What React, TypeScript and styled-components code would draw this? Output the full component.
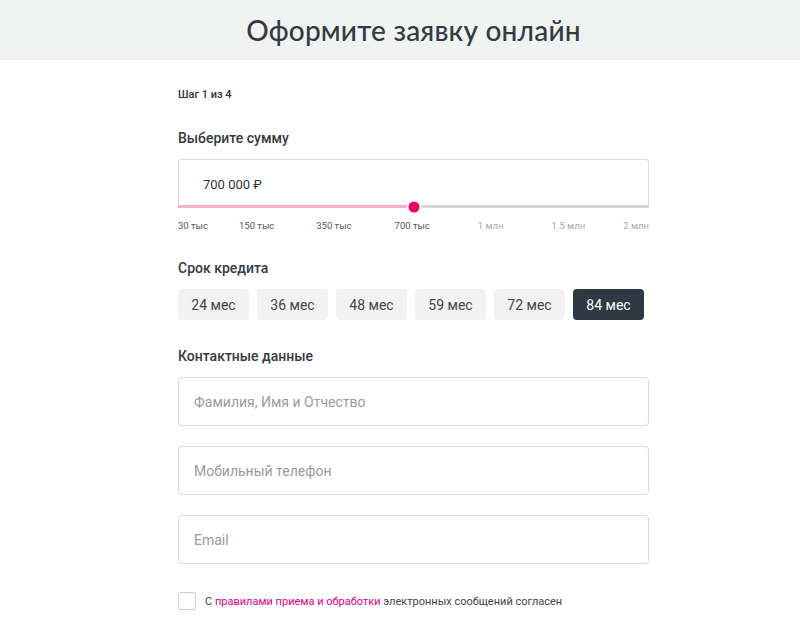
import React, { useState } from "react";
import styled, { createGlobalStyle } from "styled-components";

const GlobalStyle = createGlobalStyle`
  html, body {
    margin: 0;
    padding: 0;
    background: #ffffff;
    font-family: Roboto, "Liberation Sans", Arial, sans-serif;
    color: #333b44;
  }
`;

const terms = [24, 36, 48, 59, 72, 84];
// gap before each mark, as the scale on the site is not even
const marks = [
  { label: "30 тыс", passed: true, gap: 0 },
  { label: "150 тыс", passed: true, gap: 31 },
  { label: "350 тыс", passed: true, gap: 42 },
  { label: "700 тыс", passed: true, gap: 43 },
  { label: "1 млн", passed: false, gap: 48 },
  { label: "1.5 млн", passed: false, gap: 48 },
  { label: "2 млн", passed: false, gap: 0 },
];

const App = () => {
  const [term, setTerm] = useState<number>(84);
  const [agree, setAgree] = useState<boolean>(false);
  const progress = 50;

  return (
    <Page>
      <GlobalStyle />
      <Header>
        <Title>Оформите заявку онлайн</Title>
      </Header>
      <Form>
        <Step>Шаг 1 из 4</Step>

        <SectionTitle>Выберите сумму</SectionTitle>
        <AmountBox>
          <AmountValue>700 000 ₽</AmountValue>
          <Track>
            <TrackFill style={{ width: `${progress}%` }} />
            <Thumb style={{ left: `${progress}%` }} />
          </Track>
        </AmountBox>
        <Marks>
          {marks.map((m, i) => (
            <Mark
              key={m.label}
              passed={m.passed}
              gap={m.gap}
              last={i === marks.length - 1}
            >
              {m.label}
            </Mark>
          ))}
        </Marks>

        <SectionTitle>Срок кредита</SectionTitle>
        <Terms>
          {terms.map((t) => (
            <TermButton key={t} active={t === term} onClick={() => setTerm(t)}>
              {t} мес
            </TermButton>
          ))}
        </Terms>

        <SectionTitle>Контактные данные</SectionTitle>
        <Fields>
          <Input placeholder="Фамилия, Имя и Отчество" />
          <Input placeholder="Мобильный телефон" />
          <Input placeholder="Email" />
        </Fields>

        <Agreement>
          <CheckBox checked={agree} onClick={() => setAgree(!agree)} />
          <AgreeText>
            С <Link>правилами приема и обработки</Link> электронных сообщений
            согласен
          </AgreeText>
        </Agreement>
      </Form>
    </Page>
  );
};

const Page = styled.div`
  min-height: 617px;
`;

const Header = styled.header`
  height: 60px;
  background: #f1f2f2;
  display: flex;
  align-items: center;
  justify-content: center;
  padding-left: 27px;
`;

const Title = styled.h1`
  margin: 0;
  font-family: Lato, "Open Sans", sans-serif;
  font-weight: 500;
  font-size: 28px;
  letter-spacing: 0.2px;
  color: #323a43;
`;

const Form = styled.main`
  width: 471px;
  margin: 0 0 0 178px;
  padding-top: 28px;
  display: flex;
  flex-direction: column;
`;

const Step = styled.div`
  font-size: 11px;
  font-weight: 500;
  line-height: 14px;
  color: #333;
`;

const SectionTitle = styled.h2`
  margin: 27px 0 12px;
  font-size: 14px;
  font-weight: 500;
  line-height: 18px;
  color: #333b44;
`;

const AmountBox = styled.div`
  position: relative;
  height: 49px;
  border: 1px solid #dcdcdc;
  border-bottom: none;
  border-radius: 3px 3px 0 0;
  box-sizing: border-box;
  display: flex;
  align-items: center;
  padding: 0 0 0 24px;
`;

const AmountValue = styled.span`
  font-size: 13px;
  color: #333;
`;

const Track = styled.div`
  position: absolute;
  left: -1px;
  right: -1px;
  bottom: 0;
  height: 3px;
  background: #d6d6d6;
`;

const TrackFill = styled.div`
  height: 100%;
  background: #f8b2cd;
`;

const Thumb = styled.div`
  position: absolute;
  top: 50%;
  width: 11px;
  height: 11px;
  border-radius: 50%;
  background: #e5006a;
  border: 2px solid #fff;
  transform: translate(-50%, -50%);
`;

const Marks = styled.div`
  display: flex;
  margin-top: 12px;
`;

const Mark = styled.span<{ passed: boolean; gap: number; last: boolean }>`
  font-size: 9.5px;
  line-height: 12px;
  margin-left: ${(p) => (p.last ? "auto" : `${p.gap}px`)};
  color: ${(p) => (p.passed ? "#555" : "#a9a9a9")};
`;

const Terms = styled.div`
  display: flex;
  gap: 8px;
`;

const TermButton = styled.button<{ active: boolean }>`
  width: 71px;
  height: 31px;
  border: none;
  border-radius: 4px;
  font-family: inherit;
  font-size: 14px;
  cursor: pointer;
  background: ${(p) => (p.active ? "#2e3943" : "#f2f2f2")};
  color: ${(p) => (p.active ? "#fff" : "#444")};
`;

const Fields = styled.div`
  display: flex;
  flex-direction: column;
  gap: 20px;
`;

const Input = styled.input`
  height: 49px;
  box-sizing: border-box;
  border: 1px solid #dadada;
  border-radius: 4px;
  padding: 0 15px;
  font-family: inherit;
  font-size: 14px;
  color: #333;
  outline: none;

  &::placeholder {
    color: #9b9b9b;
  }
`;

const Agreement = styled.label`
  display: flex;
  align-items: center;
  gap: 9px;
  margin-top: 28px;
`;

const CheckBox = styled.span<{ checked: boolean }>`
  flex: none;
  width: 18px;
  height: 18px;
  box-sizing: border-box;
  border: 1px solid #cfcfcf;
  border-radius: 2px;
  background: ${(p) => (p.checked ? "#e5006a" : "#fff")};
`;

const AgreeText = styled.span`
  font-size: 11px;
  color: #444;
`;

const Link = styled.a`
  color: #e4007d;
  text-decoration: none;
`;

export default App;
